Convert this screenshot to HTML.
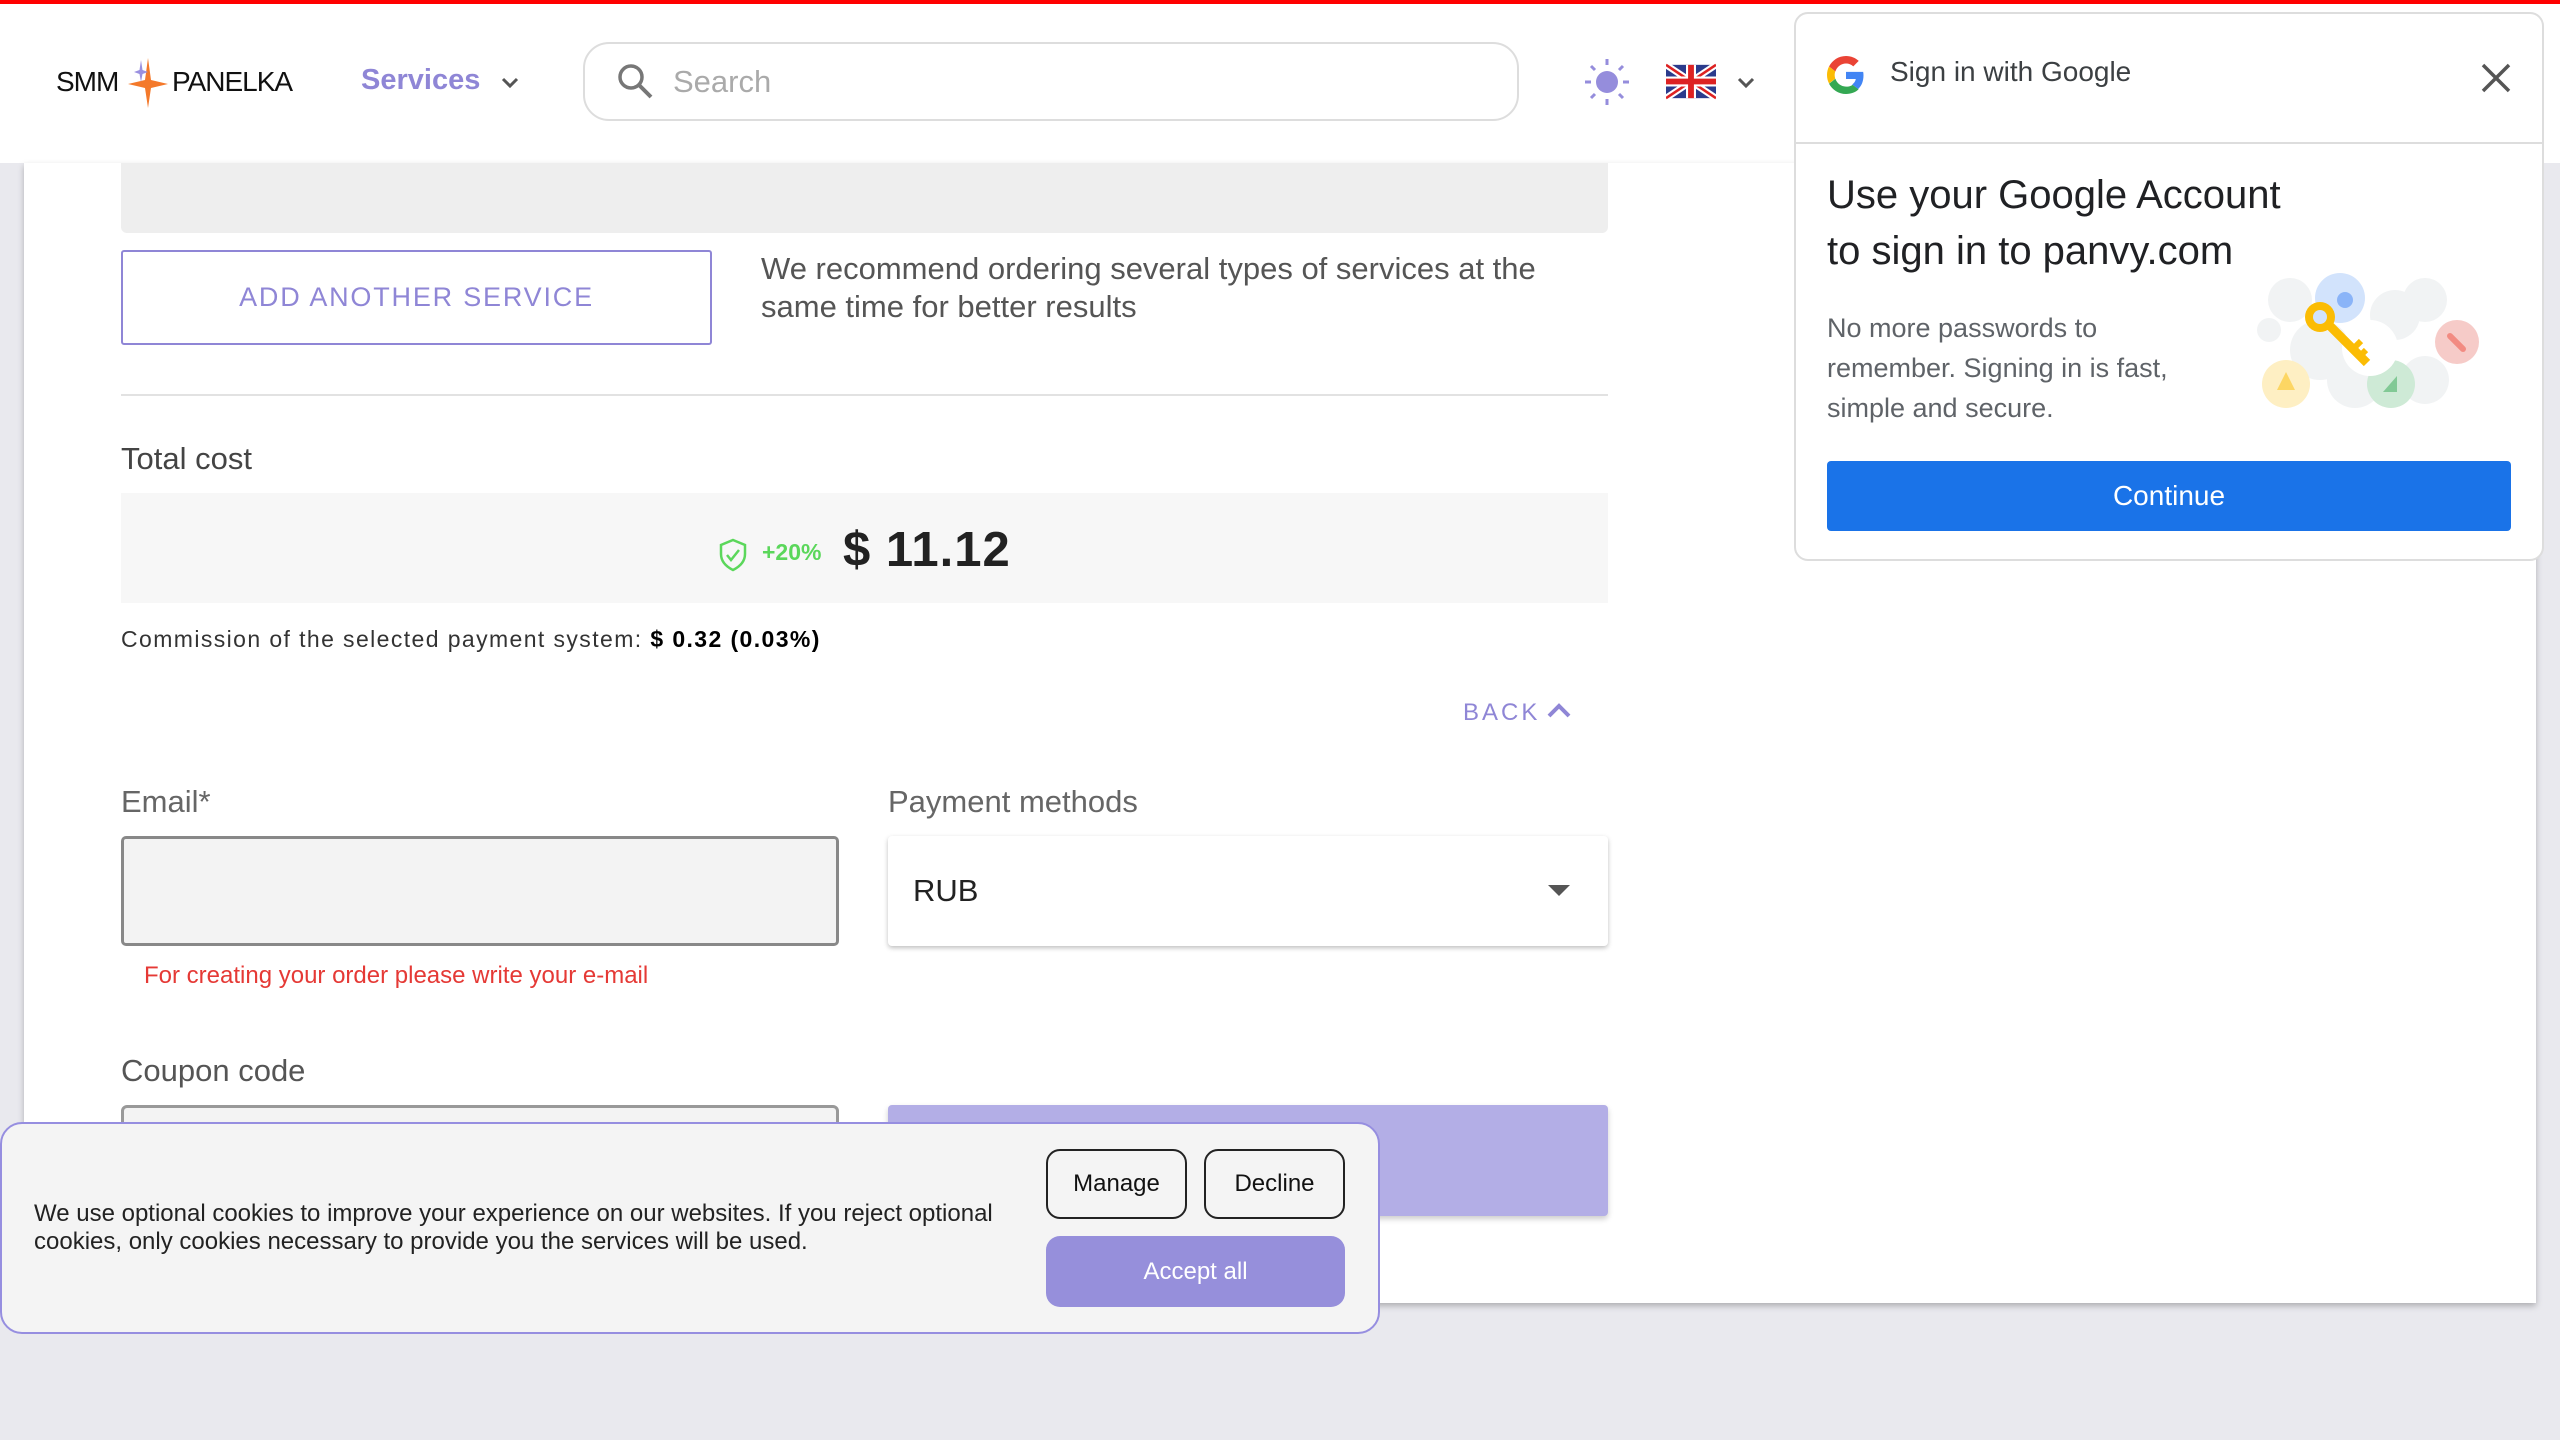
<!DOCTYPE html>
<html><head><meta charset="utf-8"><style>
*{box-sizing:border-box;margin:0;padding:0}
body{width:2560px;height:1440px;background:#e9e9ee;font-family:"Liberation Sans",sans-serif;position:relative;overflow:hidden}
.a{position:absolute}
.t{white-space:nowrap}
</style></head><body>
<div class="a" style="left:0;top:0;width:2560px;height:163px;background:#fff"></div>
<div class="a" style="left:0;top:0;width:2560px;height:4px;background:#f00"></div>
<div class="a" style="left:24px;top:163px;width:2512px;height:1140px;background:#fff;box-shadow:0 3px 6px rgba(0,0,0,.25)"></div>

<!-- header -->
<div class="a t" style="left:56px;top:66px;font-size:28px;color:#111;letter-spacing:-1px">SMM</div>
<svg class="a" style="left:128px;top:58px" width="40" height="50" viewBox="0 0 40 50"><path d="M20 0 L23 22 L40 26 L23 30 L20 50 L17 30 L0 26 L17 22Z" fill="#f4792b"/><path d="M13 2 L14.5 12 L20 14 L14.5 16 L13 24 L11.5 16 L6 14 L11.5 12Z" fill="#9a90e0"/></svg>
<div class="a t" style="left:172px;top:66px;font-size:28px;color:#111;letter-spacing:-1px">PANELKA</div>
<div class="a t" style="left:361px;top:64px;font-size:29px;font-weight:bold;color:#8f86d6">Services</div>
<svg class="a" style="left:500px;top:76px" width="20" height="14"><path d="M3 3 L10 10 L17 3" stroke="#555" stroke-width="3" fill="none"/></svg>
<div class="a" style="left:583px;top:42px;width:936px;height:79px;border:2px solid #ddd;border-radius:26px"></div>
<svg class="a" style="left:616px;top:62px" width="40" height="40"><circle cx="15" cy="15" r="11" stroke="#777" stroke-width="3.5" fill="none"/><path d="M23 23 L35 35" stroke="#777" stroke-width="4"/></svg>
<div class="a t" style="left:673px;top:64px;font-size:31px;color:#aaa">Search</div>
<svg class="a" style="left:1582px;top:56px" width="50" height="52"><circle cx="25" cy="26" r="11" fill="#958ddc"/><g stroke="#958ddc" stroke-width="3"><path d="M25 3v6M25 43v6M3 26h6M41 26h6M9 10l4 4M37 38l4 4M9 42l4-4M37 14l4-4"/></g></svg>
<svg class="a" style="left:1666px;top:63px" width="50" height="37" viewBox="0 0 60 40"><rect width="60" height="40" fill="#2b3b8c"/><path d="M0 0L60 40M60 0L0 40" stroke="#fff" stroke-width="8"/><path d="M0 0L60 40M60 0L0 40" stroke="#d22" stroke-width="3"/><path d="M30 0v40M0 20h60" stroke="#fff" stroke-width="12"/><path d="M30 0v40M0 20h60" stroke="#d22" stroke-width="7"/></svg>
<svg class="a" style="left:1736px;top:76px" width="20" height="14"><path d="M3 3 L10 10 L17 3" stroke="#555" stroke-width="3" fill="none"/></svg>

<!-- main -->
<div class="a" style="left:121px;top:163px;width:1487px;height:70px;background:#eee;border-radius:0 0 6px 6px"></div>
<div class="a t" style="left:121px;top:250px;width:591px;height:95px;border:2px solid #8f86d6;border-radius:3px;color:#8f86d6;font-size:27px;letter-spacing:1.8px;text-align:center;line-height:91px">ADD ANOTHER SERVICE</div>
<div class="a" style="left:761px;top:250px;width:800px;font-size:31px;line-height:38px;color:#555">We recommend ordering several types of services at the same time for better results</div>
<div class="a" style="left:121px;top:394px;width:1487px;height:2px;background:#e2e2e2"></div>
<div class="a t" style="left:121px;top:441px;font-size:31px;color:#444">Total cost</div>
<div class="a" style="left:121px;top:493px;width:1487px;height:110px;background:#f7f7f7"></div>
<svg class="a" style="left:718px;top:538px" width="30" height="34" viewBox="0 0 30 34"><path d="M15 2 L27 7 V16 C27 24 21 29 15 32 C9 29 3 24 3 16 V7Z" stroke="#5bd75b" stroke-width="2.5" fill="none"/><path d="M9 17 L13 22 L21 12" stroke="#5bd75b" stroke-width="2.5" fill="none"/></svg>
<div class="a t" style="left:762px;top:539px;font-size:23px;color:#5bd75b;font-weight:bold">+20%</div>
<div class="a t" style="left:843px;top:522px;font-size:49px;font-weight:bold;color:#222;letter-spacing:1px">$ 11.12</div>
<div class="a t" style="left:121px;top:626px;font-size:23px;color:#333;letter-spacing:1.4px">Commission of the selected payment system: <b style="color:#000">$ 0.32 (0.03%)</b></div>
<div class="a t" style="left:1463px;top:699px;font-size:24px;color:#8f86d6;letter-spacing:3px">BACK</div>
<svg class="a" style="left:1546px;top:700px" width="26" height="20"><path d="M3 16 L13 6 L23 16" stroke="#8f86d6" stroke-width="4" fill="none"/></svg>

<div class="a t" style="left:121px;top:784px;font-size:31px;color:#666">Email*</div>
<div class="a" style="left:121px;top:836px;width:718px;height:110px;background:#f3f3f3;border:3px solid #888;border-radius:5px"></div>
<div class="a t" style="left:144px;top:962px;font-size:24px;color:#e53935">For creating your order please write your e-mail</div>
<div class="a t" style="left:888px;top:784px;font-size:31px;color:#666">Payment methods</div>
<div class="a" style="left:888px;top:836px;width:720px;height:110px;background:#fff;box-shadow:0 2px 5px rgba(0,0,0,.25);border-radius:4px"></div>
<div class="a t" style="left:913px;top:873px;font-size:31px;color:#222">RUB</div>
<svg class="a" style="left:1548px;top:885px" width="22" height="12"><path d="M0 0 H22 L11 11Z" fill="#555"/></svg>
<div class="a t" style="left:121px;top:1053px;font-size:31px;color:#555">Coupon code</div>
<div class="a" style="left:121px;top:1105px;width:718px;height:110px;background:#f3f3f3;border:3px solid #999;border-radius:6px"></div>
<div class="a" style="left:888px;top:1105px;width:720px;height:111px;background:#b3aee6;border-radius:4px;box-shadow:0 3px 6px rgba(0,0,0,.2)"></div>

<!-- cookie -->
<div class="a" style="left:0;top:1122px;width:1380px;height:212px;background:#f4f4f4;border:2px solid #968ee0;border-radius:22px"></div>
<div class="a" style="left:34px;top:1200px;width:980px;font-size:24px;line-height:28px;color:#222">We use optional cookies to improve your experience on our websites. If you reject optional cookies, only cookies necessary to provide you the services will be used.</div>
<div class="a t" style="left:1046px;top:1149px;width:141px;height:70px;border:2px solid #222;border-radius:14px;font-size:24px;line-height:66px;text-align:center;color:#111">Manage</div>
<div class="a t" style="left:1204px;top:1149px;width:141px;height:70px;border:2px solid #222;border-radius:14px;font-size:24px;line-height:66px;text-align:center;color:#111">Decline</div>
<div class="a t" style="left:1046px;top:1236px;width:299px;height:71px;background:#968fdb;border-radius:14px;font-size:24px;line-height:71px;text-align:center;color:#fff">Accept all</div>

<!-- google popup -->
<div class="a" style="left:1794px;top:12px;width:750px;height:549px;background:#fff;border:2px solid #ddd;border-radius:14px"></div>
<div class="a" style="left:1795px;top:142px;width:748px;height:2px;background:#ddd"></div>
<svg class="a" style="left:1827px;top:56px" width="38" height="38" viewBox="0 0 48 48"><path fill="#EA4335" d="M24 9.5c3.5 0 6.7 1.2 9.2 3.6l6.9-6.9C35.9 2.4 30.5 0 24 0 14.6 0 6.6 5.4 2.6 13.3l8 6.2C12.5 13.7 17.8 9.5 24 9.5z"/><path fill="#4285F4" d="M46.1 24.5c0-1.6-.1-3.1-.4-4.5H24v9h12.4c-.5 2.9-2.200 5.3-4.6 7l7.5 5.8c4.4-4 6.8-10 6.8-17.300z"/><path fill="#FBBC05" d="M10.5 28.6c-.5-1.4-.8-3-.8-4.6s.3-3.2.8-4.6l-8-6.2C.9 16.5 0 20.1 0 24s.9 7.5 2.6 10.8l7.9-6.2z"/><path fill="#34A853" d="M24 48c6.5 0 11.9-2.1 15.9-5.8l-7.5-5.8c-2.1 1.4-4.9 2.3-8.4 2.3-6.2 0-11.5-4.2-13.4-9.9l-8 6.2C6.6 42.6 14.6 48 24 48z"/></svg>
<div class="a t" style="left:1890px;top:56px;font-size:28px;color:#3c4043">Sign in with Google</div>
<svg class="a" style="left:2480px;top:62px" width="32" height="32"><path d="M3 3 L29 29 M29 3 L3 29" stroke="#555" stroke-width="3.5"/></svg>
<div class="a" style="left:1827px;top:167px;font-size:40px;line-height:56px;color:#202124">Use your Google Account<br>to sign in to panvy.com</div>
<div class="a" style="left:1827px;top:308px;font-size:27px;line-height:40px;color:#5f6368">No more passwords to<br>remember. Signing in is fast,<br>simple and secure.</div>
<svg class="a" style="left:2245px;top:260px" width="250" height="160" viewBox="0 0 250 160">
<g fill="#f1f3f4"><circle cx="24" cy="70" r="12"/><circle cx="45" cy="40" r="22"/><circle cx="180" cy="40" r="22"/><circle cx="150" cy="55" r="25"/><circle cx="75" cy="90" r="30"/><circle cx="180" cy="120" r="24"/><circle cx="110" cy="120" r="28"/></g>
<circle cx="95" cy="38" r="25" fill="#d2e3fc"/><circle cx="100" cy="40" r="8" fill="#8ab4f8"/>
<circle cx="212" cy="82" r="22" fill="#f6cbc8"/><path d="M205 76 L218 89" stroke="#f28b82" stroke-width="6" stroke-linecap="round"/>
<circle cx="41" cy="124" r="24" fill="#feefc3"/><path d="M41 112 L50 130 H32Z" fill="#fdd663"/>
<circle cx="146" cy="124" r="24" fill="#ceead6"/><path d="M152 116 V132 H138Z" fill="#81c995"/>
<circle cx="125" cy="88" r="28" fill="#fff"/>
<circle cx="75" cy="57" r="15" fill="#fbbc04"/><circle cx="75" cy="57" r="7" fill="#d2e3fc"/>
<path d="M85 66 L122 103" stroke="#fbbc04" stroke-width="9"/><path d="M108 89 L116 81 M115 96 L121 90" stroke="#fbbc04" stroke-width="6"/>
</svg>
<div class="a t" style="left:1827px;top:461px;width:684px;height:70px;background:#1a73e8;border-radius:4px;color:#fff;font-size:28px;line-height:70px;text-align:center">Continue</div>
</body></html>
